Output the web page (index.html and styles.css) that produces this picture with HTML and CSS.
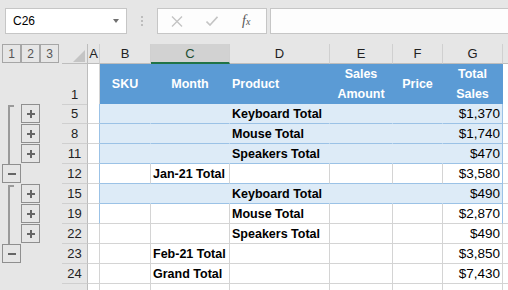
FILE: index.html
```html
<!DOCTYPE html>
<html lang="en">
<head>
    <meta charset="UTF-8">
    <meta name="viewport" content="width=device-width, initial-scale=1.0">
    <title>Sales subtotals</title>
    <link rel="stylesheet" href="styles.css">
</head>
<body>
    <!-- formula bar -->
    <div class="formula-bar">
        <div class="name-box"><span>C26</span><span class="caret"></span></div>
        <div class="grip"><i></i><i></i><i></i></div>
        <div class="fn-box">
            <svg class="fn-icon" width="12" height="11" viewBox="0 0 12 11"><path d="M1 0.5L11 10.5M11 0.5L1 10.5"/></svg>
            <svg class="fn-icon check" width="12" height="10" viewBox="0 0 12 10"><path d="M0.5 5.5L4 9L11.5 0.8"/></svg>
            <span class="fx">f<span class="x">x</span></span>
        </div>
        <div class="formula-input"></div>
    </div>

    <div class="sheet">
        <!-- column headers -->
        <div class="row">
            <div class="ol levels"><span class="lvl">1</span><span class="lvl">2</span><span class="lvl">3</span></div>
            <div class="corner"><svg width="12" height="12" viewBox="0 0 12 12"><path d="M12 0V12H0Z"/></svg></div>
            <div class="ch">A</div>
            <div class="ch">B</div>
            <div class="ch sel">C</div>
            <div class="ch">D</div>
            <div class="ch">E</div>
            <div class="ch">F</div>
            <div class="ch">G</div>
            <div class="ch last"></div>
        </div>

        <!-- table header -->
        <div class="row tall head">
            <div class="ol"></div>
            <div class="rh">1</div>
            <div class="c a"></div>
            <div class="c t">SKU</div>
            <div class="c t">Month</div>
            <div class="c t left">Product</div>
            <div class="c t">Sales<br>Amount</div>
            <div class="c t">Price</div>
            <div class="c t g">Total<br>Sales</div>
            <div class="c h"></div>
        </div>

        <div class="row tbl band">
            <div class="ol"><span class="slot"><i class="bar top"></i></span><span class="btn"><svg width="8" height="8" viewBox="0 0 8 8"><path d="M0 3h8v2H0zM3 0h2v8H3z"/></svg></span></div>
            <div class="rh">5</div>
            <div class="c a"></div>
            <div class="c t"></div>
            <div class="c t"></div>
            <div class="c t">Keyboard Total</div>
            <div class="c t"></div>
            <div class="c t"></div>
            <div class="c t g num">$1,370</div>
            <div class="c h"></div>
        </div>

        <div class="row tbl band">
            <div class="ol"><span class="slot"><i class="bar"></i></span><span class="btn"><svg width="8" height="8" viewBox="0 0 8 8"><path d="M0 3h8v2H0zM3 0h2v8H3z"/></svg></span></div>
            <div class="rh">8</div>
            <div class="c a"></div>
            <div class="c t"></div>
            <div class="c t"></div>
            <div class="c t">Mouse Total</div>
            <div class="c t"></div>
            <div class="c t"></div>
            <div class="c t g num">$1,740</div>
            <div class="c h"></div>
        </div>

        <div class="row tbl band">
            <div class="ol"><span class="slot"><i class="bar"></i></span><span class="btn"><svg width="8" height="8" viewBox="0 0 8 8"><path d="M0 3h8v2H0zM3 0h2v8H3z"/></svg></span></div>
            <div class="rh">11</div>
            <div class="c a"></div>
            <div class="c t"></div>
            <div class="c t"></div>
            <div class="c t">Speakers Total</div>
            <div class="c t"></div>
            <div class="c t"></div>
            <div class="c t g num">$470</div>
            <div class="c h"></div>
        </div>

        <div class="row tbl sub">
            <div class="ol"><span class="btn"><svg width="8" height="8" viewBox="0 0 8 8"><path d="M0 3h8v2H0z"/></svg></span></div>
            <div class="rh">12</div>
            <div class="c a"></div>
            <div class="c t"></div>
            <div class="c t">Jan-21 Total</div>
            <div class="c t"></div>
            <div class="c t"></div>
            <div class="c t"></div>
            <div class="c t g num">$3,580</div>
            <div class="c h"></div>
        </div>

        <div class="row tbl band">
            <div class="ol"><span class="slot"><i class="bar top"></i></span><span class="btn"><svg width="8" height="8" viewBox="0 0 8 8"><path d="M0 3h8v2H0zM3 0h2v8H3z"/></svg></span></div>
            <div class="rh">15</div>
            <div class="c a"></div>
            <div class="c t"></div>
            <div class="c t"></div>
            <div class="c t">Keyboard Total</div>
            <div class="c t"></div>
            <div class="c t"></div>
            <div class="c t g num">$490</div>
            <div class="c h"></div>
        </div>

        <div class="row tbl">
            <div class="ol"><span class="slot"><i class="bar"></i></span><span class="btn"><svg width="8" height="8" viewBox="0 0 8 8"><path d="M0 3h8v2H0zM3 0h2v8H3z"/></svg></span></div>
            <div class="rh">19</div>
            <div class="c a"></div>
            <div class="c t"></div>
            <div class="c t"></div>
            <div class="c t">Mouse Total</div>
            <div class="c t"></div>
            <div class="c t"></div>
            <div class="c t g num">$2,870</div>
            <div class="c h"></div>
        </div>

        <div class="row">
            <div class="ol"><span class="slot"><i class="bar"></i></span><span class="btn"><svg width="8" height="8" viewBox="0 0 8 8"><path d="M0 3h8v2H0zM3 0h2v8H3z"/></svg></span></div>
            <div class="rh">22</div>
            <div class="c a"></div>
            <div class="c"></div>
            <div class="c"></div>
            <div class="c">Speakers Total</div>
            <div class="c"></div>
            <div class="c"></div>
            <div class="c num">$490</div>
            <div class="c h"></div>
        </div>

        <div class="row">
            <div class="ol"><span class="btn"><svg width="8" height="8" viewBox="0 0 8 8"><path d="M0 3h8v2H0z"/></svg></span></div>
            <div class="rh">23</div>
            <div class="c a"></div>
            <div class="c"></div>
            <div class="c">Feb-21 Total</div>
            <div class="c"></div>
            <div class="c"></div>
            <div class="c"></div>
            <div class="c num">$3,850</div>
            <div class="c h"></div>
        </div>

        <div class="row">
            <div class="ol"></div>
            <div class="rh">24</div>
            <div class="c a"></div>
            <div class="c"></div>
            <div class="c">Grand Total</div>
            <div class="c"></div>
            <div class="c"></div>
            <div class="c"></div>
            <div class="c num">$7,430</div>
            <div class="c h"></div>
        </div>

        <div class="row">
            <div class="ol"></div>
            <div class="rh"></div>
            <div class="c a"></div>
            <div class="c"></div>
            <div class="c"></div>
            <div class="c"></div>
            <div class="c"></div>
            <div class="c"></div>
            <div class="c"></div>
            <div class="c h"></div>
        </div>
    </div>
</body>
</html>
```

FILE: styles.css
```css
body {
    margin: 0;
    background-color: #e6e6e6;
    font-family: "Liberation Sans", Arial, sans-serif;
    overflow: hidden;
}

/* formula bar */
.formula-bar {
    display: flex;
    align-items: flex-start;
    height: 44px;
    padding: 8px 0 0 5px;
    box-sizing: border-box;
}
.name-box {
    width: 122px;
    height: 26px;
    box-sizing: border-box;
    border: 1px solid #c6c6c6;
    background-color: #fff;
    display: flex;
    align-items: center;
    justify-content: space-between;
    padding: 0 7px 0 7px;
    font-size: 12px;
    color: #000;
}
.caret {
    width: 0;
    height: 0;
    border-left: 3.5px solid transparent;
    border-right: 3.5px solid transparent;
    border-top: 4px solid #707070;
}
.grip {
    width: 30px;
    display: flex;
    flex-direction: column;
    align-items: center;
    gap: 2px;
    padding-top: 8px;
}
.grip i {
    width: 2px;
    height: 2px;
    background-color: #bdbdbd;
}
.fn-box {
    width: 110px;
    height: 26px;
    box-sizing: border-box;
    border: 1px solid #c6c6c6;
    background-color: #fdfdfd;
    display: flex;
    align-items: center;
    padding-left: 13px;
}
.fn-icon {
    fill: none;
    stroke: #c4c4c4;
    stroke-width: 1.4;
}
.fn-icon.check {
    margin-left: 23px;
    stroke-width: 1.6;
}
.fx {
    margin-left: 24px;
    font-family: "Liberation Serif", serif;
    font-style: italic;
    font-size: 14px;
    color: #555;
}
.fx .x {
    font-size: 10px;
}
.formula-input {
    flex: 1;
    height: 26px;
    margin-left: 3px;
    box-sizing: border-box;
    border: 1px solid #c6c6c6;
    border-right: none;
    background-color: #fdfdfd;
}

/* sheet grid */
.row {
    display: grid;
    grid-template-columns: 62px 26px 12px 51px 79px 100px 63px 50px 60px 1fr;
    height: 20px;
}
.row.tall {
    height: 40px;
}
.row > div {
    box-sizing: border-box;
    min-width: 0;
}

/* outline gutter */
.ol {
    display: flex;
    padding-left: 2px;
}
.slot {
    width: 19px;
    height: 100%;
}
.bar {
    display: block;
    margin-left: 6px;
    width: 6px;
    height: 100%;
    box-sizing: border-box;
    border-left: 2px solid #9a9a9a;
}
.bar.top {
    margin-top: 1px;
    height: calc(100% - 1px);
    border-top: 2px solid #9a9a9a;
}
.btn {
    width: 19px;
    height: 19px;
    box-sizing: border-box;
    border: 1px solid #8f8f8f;
    display: flex;
    align-items: center;
    justify-content: center;
}
.btn svg {
    fill: #666;
}
.lvl {
    width: 19px;
    height: 19px;
    box-sizing: border-box;
    border: 1px solid #a6a6a6;
    display: flex;
    align-items: center;
    justify-content: center;
    font-size: 12px;
    color: #555;
}

/* headers */
.corner {
    border-right: 1px solid #bdbdbd;
    border-bottom: 1px solid #bdbdbd;
    display: flex;
    justify-content: flex-end;
    align-items: flex-end;
    padding: 0 2px 1px 0;
}
.corner svg {
    fill: #c4c4c4;
}
.ch {
    border-right: 1px solid #d0d0d0;
    border-bottom: 1px solid #bdbdbd;
    display: flex;
    align-items: center;
    justify-content: center;
    font-size: 13px;
    color: #222;
}
.ch.sel {
    background-color: #d2d2d2;
    border-bottom: 2px solid #217346;
    color: #1d4f33;
}
.ch.last {
    border-right: none;
}
.rh {
    border-right: 1px solid #bdbdbd;
    border-bottom: 1px solid #cfcfcf;
    display: flex;
    justify-content: center;
    align-items: flex-end;
    font-size: 13px;
    line-height: 18px;
    color: #222;
}

/* cells */
.c {
    background-color: #fff;
    border-right: 1px solid #d4d4d4;
    border-bottom: 1px solid #d4d4d4;
    display: flex;
    align-items: flex-end;
    padding: 0 2px;
    line-height: 18px;
    font-size: 12.5px;
    font-weight: bold;
    color: #000;
    white-space: nowrap;
}
.c.num {
    justify-content: flex-end;
    font-weight: normal;
    font-size: 13.5px;
}
.c.h {
    border-right: none;
}
.head .c.t {
    background-color: #5b9bd5;
    border-right-color: #5b9bd5;
    border-bottom-color: #5b9bd5;
    color: #fff;
    justify-content: center;
    align-items: center;
    text-align: center;
    line-height: 20px;
}
.head .c.left {
    justify-content: flex-start;
}
.band .t {
    background-color: #ddebf7;
    border-right-color: #ddebf7;
    border-bottom-color: #9bc2e6;
}
.sub .t {
    border-bottom-color: #9bc2e6;
}
.tbl .a,
.tbl .g {
    border-right-color: #9bc2e6;
}
```
